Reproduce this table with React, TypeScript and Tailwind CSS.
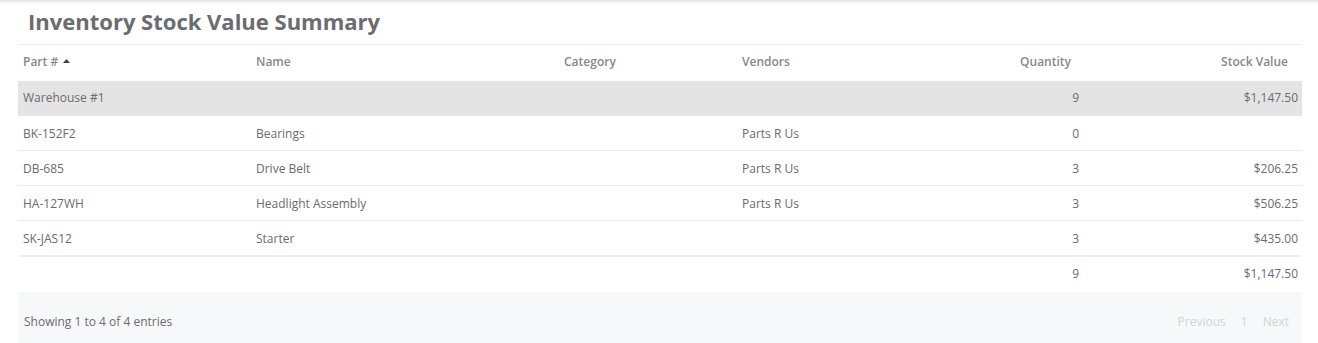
import React from "react";

type Row = { part: string; name: string; vendor: string; qty: string; value: string };

const rows: Row[] = [
  { part: "BK-152F2", name: "Bearings", vendor: "Parts R Us", qty: "0", value: "" },
  { part: "DB-685", name: "Drive Belt", vendor: "Parts R Us", qty: "3", value: "$206.25" },
  { part: "HA-127WH", name: "Headlight Assembly", vendor: "Parts R Us", qty: "3", value: "$506.25" },
  { part: "SK-JAS12", name: "Starter", vendor: "", qty: "3", value: "$435.00" },
];

export default function App() {
  return (
    <div
      className="relative h-[343px] w-[1318px] overflow-hidden bg-white text-[12px] text-[#6a6c6f]"
      style={{ fontFamily: '"Open Sans", "Noto Sans", sans-serif' }}
    >
      <div className="h-[4px] bg-gradient-to-b from-[#e2e2e2] to-white" />
      <h1 className="pl-[28px] pt-[3px] text-[22px] font-bold leading-[29px] text-[#6a6c6f]">
        Inventory Stock Value Summary
      </h1>

      <div className="mx-[18px] mt-[8px] w-[1284px]">
        <table className="w-full table-fixed border-collapse">
          <colgroup>
            <col className="w-[233px]" />
            <col className="w-[308px]" />
            <col className="w-[178px]" />
            <col className="w-[200px]" />
            <col className="w-[147px]" />
            <col className="w-[218px]" />
          </colgroup>
          <thead>
            <tr className="h-[36px] border-t border-[#eeeeee] text-[12px] text-[#888888]">
              <th className="px-[5px] pb-[2px] text-left font-semibold">
                <span className="inline-flex items-center gap-[5px]">
                  Part #
                  <svg width="7" height="4" viewBox="0 0 7 4" className="mt-[-1px]">
                    <path d="M0 4 L3.5 0 L7 4 Z" fill="#444" />
                  </svg>
                </span>
              </th>
              <th className="px-[5px] pb-[2px] text-left font-semibold">Name</th>
              <th className="px-[5px] pb-[2px] text-left font-semibold">Category</th>
              <th className="px-[5px] pb-[2px] text-left font-semibold">Vendors</th>
              <th className="pr-[13px] pb-[2px] text-right font-semibold">Quantity</th>
              <th className="pr-[14px] pb-[2px] text-right font-semibold">Stock Value</th>
            </tr>
          </thead>
          <tbody>
            <tr className="h-[35px] bg-[#e4e4e4]">
              <td className="px-[5px]">Warehouse #1</td>
              <td />
              <td />
              <td />
              <td className="px-[5px] text-right">9</td>
              <td className="px-[4px] text-right">$1,147.50</td>
            </tr>
            {rows.map((r) => (
              <tr key={r.part} className="h-[35px] border-t border-[#e9e9e9]">
                <td className="px-[5px] pt-[2px]">{r.part}</td>
                <td className="px-[5px] pt-[2px]">{r.name}</td>
                <td className="px-[5px] pt-[2px]" />
                <td className="px-[5px] pt-[2px]">{r.vendor}</td>
                <td className="px-[5px] pt-[2px] text-right">{r.qty}</td>
                <td className="px-[4px] pt-[2px] text-right">{r.value}</td>
              </tr>
            ))}
            <tr className="h-[36px] border-t-2 border-[#eeeeee]">
              <td />
              <td />
              <td />
              <td />
              <td className="px-[5px] text-right">9</td>
              <td className="px-[4px] text-right">$1,147.50</td>
            </tr>
          </tbody>
        </table>

        <div className="flex h-[51px] items-center justify-between bg-[#f7f8f9] pl-[6px] pr-[13px] pt-[10px]">
          <span className="text-[12px] text-[#6a6c6f]">Showing 1 to 4 of 4 entries</span>
          <div className="flex items-center gap-[15px] text-[12px] text-[#d2d5d8]">
            <span>Previous</span>
            <span>1</span>
            <span>Next</span>
          </div>
        </div>
      </div>
    </div>
  );
}
